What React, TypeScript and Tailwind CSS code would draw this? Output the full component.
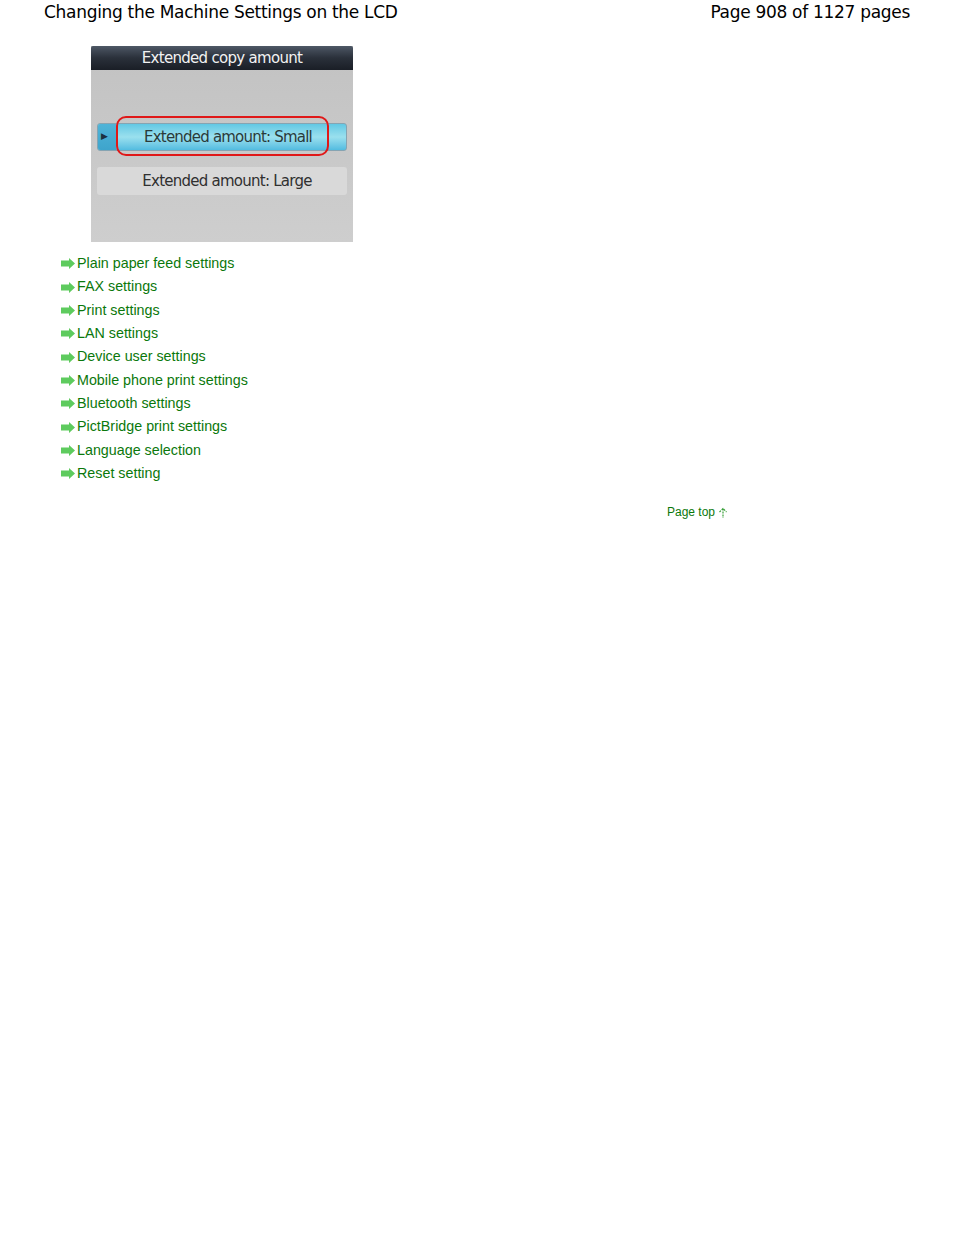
import React from "react";

const links = [
  "Plain paper feed settings",
  "FAX settings",
  "Print settings",
  "LAN settings",
  "Device user settings",
  "Mobile phone print settings",
  "Bluetooth settings",
  "PictBridge print settings",
  "Language selection",
  "Reset setting",
];

function Arrow() {
  return (
    <svg width="15" height="11" viewBox="0 0 15 11" className="shrink-0">
      <path d="M0 2.5 H8 V0 L14 5.5 L8 11 V8.5 H0 Z" fill="#5ecb5e" />
    </svg>
  );
}

const lcdFont = { fontFamily: '"DejaVu Sans", sans-serif' };

export default function App() {
  return (
    <div className="w-[954px] h-[1235px] bg-white relative" style={{ fontFamily: '"Liberation Sans", Arial, sans-serif' }}>
      <div className="flex justify-between pl-[44px] pr-[44px] text-[17px] leading-[24px] tracking-[-0.3px] text-black" style={{ fontFamily: 'Tahoma, "DejaVu Sans", sans-serif' }}>
        <span>Changing the Machine Settings on the LCD</span>
        <span>Page 908 of 1127 pages</span>
      </div>
      <div className="ml-[91px] mt-[22px] w-[262px] h-[196px] bg-gradient-to-b from-[#c2c2c2] to-[#cecece] flex flex-col">
        <div className="h-[24px] bg-gradient-to-b from-[#4e5866] via-[#2a303a] to-[#1a1e26] text-[#f2f2f2] text-[15px] leading-[24px] text-center tracking-[-0.7px] rounded-t-[2px]" style={lcdFont}>
          Extended copy amount
        </div>
        <div className="relative mt-[53px] mx-[6px] h-[28px] rounded-[3px] border border-[#86a4b2] bg-gradient-to-b from-[#62c8e4] via-[#9ae0ee] to-[#52bce0] flex items-center">
          <div className="absolute left-0 top-0 bottom-0 w-[18px] rounded-l-[3px] bg-gradient-to-b from-[#4fb4d8] to-[#3ea4cc]"></div>
          <span className="relative ml-[3px] text-[9px] text-[#1c3040]">▶</span>
          <span className="relative flex-1 text-center text-[15px] text-[#2a3a3a] pl-[2px] tracking-[-0.8px]" style={lcdFont}>Extended amount: Small</span>
          <div className="absolute left-[18px] top-[-8px] w-[213px] h-[40px] rounded-[10px] border-2 border-[#e01818]"></div>
        </div>
        <div className="mt-[16px] mx-[6px] h-[28px] rounded-[3px] bg-[#d9d9d9] flex items-center justify-center text-[15px] text-[#303030] pl-[10px] tracking-[-0.75px]" style={lcdFont}>
          Extended amount: Large
        </div>
      </div>
      <div className="ml-[61px] mt-[10px] flex flex-col">
        {links.map((l) => (
          <div key={l} className="flex items-center gap-[1px] h-[23.35px] text-[14.3px] text-[#0b780b]">
            <Arrow />
            <span>{l}</span>
          </div>
        ))}
      </div>
      <div className="ml-[667px] mt-[18px] flex items-center text-[12px] text-[#0b780b]">
        <span>Page top</span>
        <svg width="12" height="12" viewBox="0 0 12 12" className="ml-[2px] mt-[2px]">
          <path d="M6 1.5 V11 M2.5 5 L6 1.5 L9.5 5" stroke="#3aa03a" strokeWidth="1.2" fill="none" strokeDasharray="2 1" />
        </svg>
      </div>
    </div>
  );
}
